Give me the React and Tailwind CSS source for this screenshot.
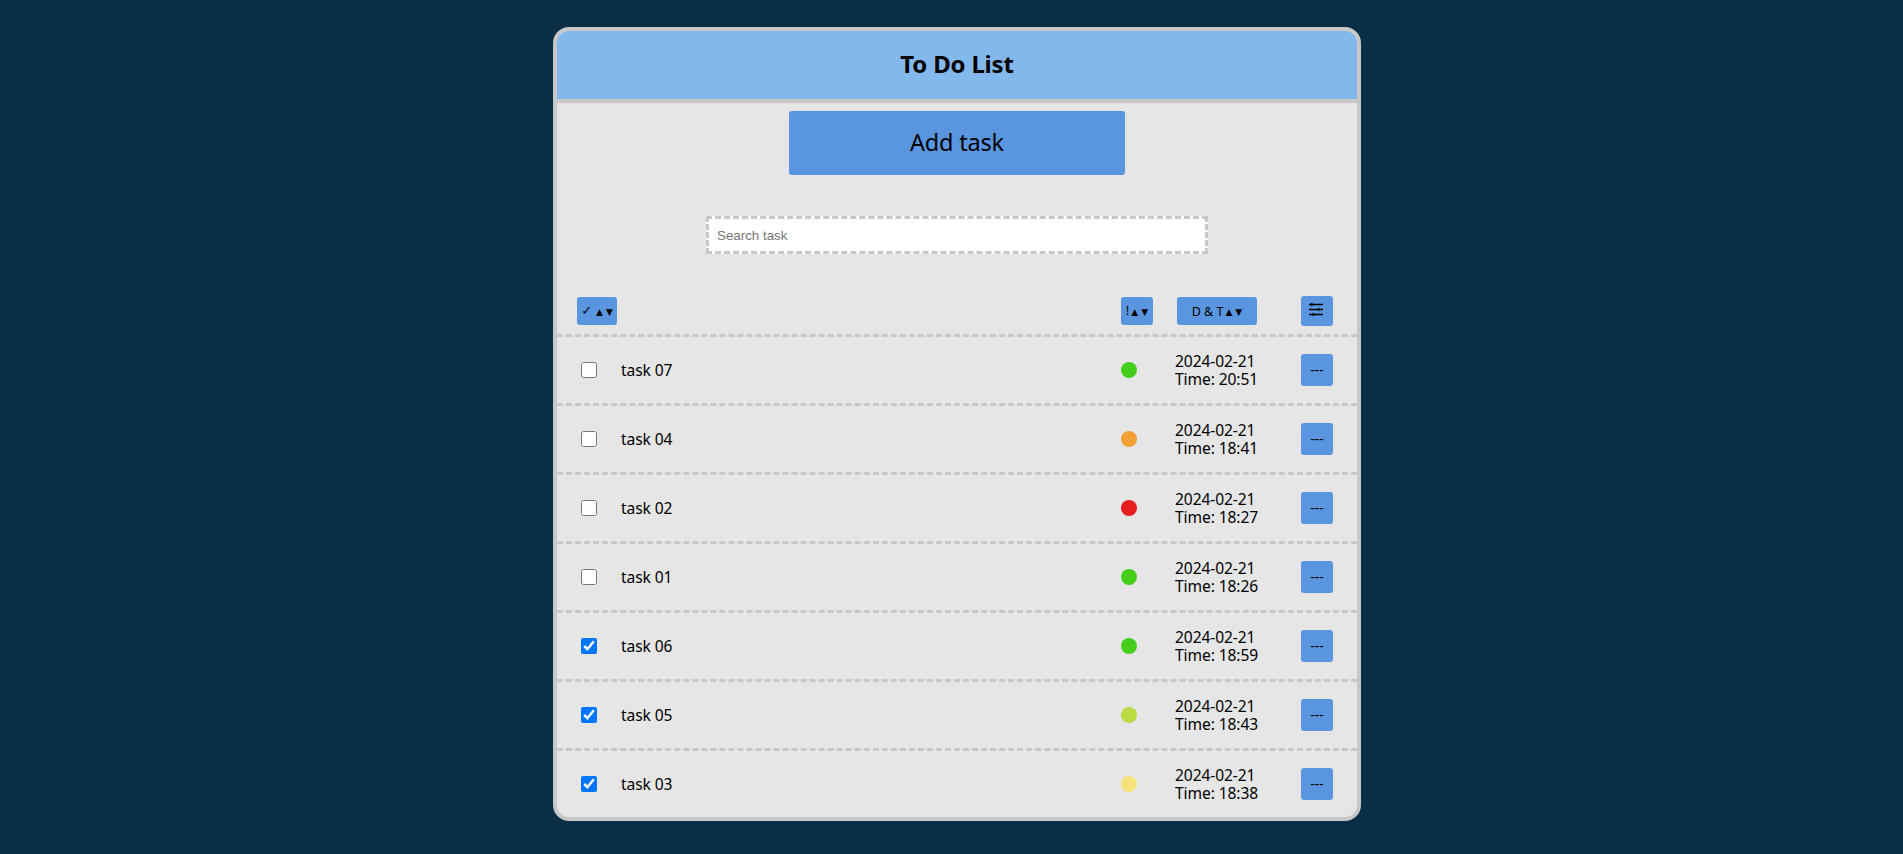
import React from 'react';

const tasks = [
  { name: 'task 07', color: 'bg-[#44ce1b]', time: '20:51', done: false },
  { name: 'task 04', color: 'bg-[#f2a134]', time: '18:41', done: false },
  { name: 'task 02', color: 'bg-[#e51f1f]', time: '18:27', done: false },
  { name: 'task 01', color: 'bg-[#44ce1b]', time: '18:26', done: false },
  { name: 'task 06', color: 'bg-[#44ce1b]', time: '18:59', done: true },
  { name: 'task 05', color: 'bg-[#bbdb44]', time: '18:43', done: true },
  { name: 'task 03', color: 'bg-[#f7e379]', time: '18:38', done: true },
];

function Button({ className, children }) {
  return (
    <button className={`flex shrink-0 items-center justify-center whitespace-nowrap rounded-[3px] bg-[#5a96e0] text-black ${className}`}>
      {children}
    </button>
  );
}

function Arrows() {
  return (
    <span className="ml-0.5 flex gap-[3px] pt-px font-['DejaVu_Sans',sans-serif] text-[9px] leading-3">
      <span>▲</span>
      <span>▼</span>
    </span>
  );
}

function FilterIcon() {
  return (
    <svg width="16" height="14" viewBox="0 0 16 14" className="-translate-x-px -translate-y-[2px]" stroke="#000" fill="#000">
      <path d="M1 2.5h14M1 7.5h14M1 12.5h14" strokeWidth="1.3" />
      <circle cx="3.7" cy="2.5" r="1" />
      <circle cx="10.7" cy="7.5" r="1" />
      <circle cx="5.3" cy="12.5" r="1" />
    </svg>
  );
}

function Task({ task }) {
  return (
    <li className="flex h-[69px] items-center border-t-[3px] border-dashed border-[#c8c8c8] pl-5 pr-6">
      <input type="checkbox" defaultChecked={task.done} className="mx-1 size-4 shrink-0" />
      <span className="ml-5 flex-1 text-[15.6px] leading-6 tracking-[-0.1px]">{task.name}</span>
      <span className={`size-4 rounded-full ${task.color}`} />
      <div className="ml-[38px] w-[126px] text-[15.6px] leading-[18px] tracking-[-0.1px]">
        <p>2024-02-21</p>
        <p>Time: {task.time}</p>
      </div>
      <Button className="size-8 text-[13.333px] font-medium">---</Button>
    </li>
  );
}

export default function App() {
  return (
    <div className="min-h-screen bg-[#0a2e46] pl-[11px] pt-[27px] font-['Noto_Sans',sans-serif] text-black">
      <main className="mx-auto h-[794px] w-[808px] overflow-hidden rounded-[16px] border-4 border-[#c8c8c8] bg-[#e6e6e6]">
        <header className="flex h-[72px] items-center justify-center border-b-4 border-[#c8c8c8] bg-[#83b8ec] pb-0.5">
          <h1 className="text-[24px] font-bold leading-7 tracking-[-0.2px]">To Do List</h1>
        </header>
        <section className="flex flex-col items-center pt-2">
          <Button className="h-16 w-[336px] text-[23.5px] tracking-[-0.2px]">Add task</Button>
          <input
            type="text"
            placeholder="Search task"
            className="mt-[41px] h-[38px] w-[502px] border-[3px] border-dashed border-[#c8c8c8] bg-white px-2 font-['Liberation_Sans',Arial,sans-serif] text-[13.333px] placeholder:text-[#757575]"
          />
        </section>
        <div className="mt-[42px] flex h-[30px] items-center pl-5 pr-6">
          <Button className="h-7 w-10 text-[13px]">
            <span className="mr-0.5 font-['DejaVu_Sans',sans-serif] text-[13px]">✓</span>
            <Arrows />
          </Button>
          <div className="flex-1" />
          <Button className="h-7 w-8 text-[13px]">!<Arrows /></Button>
          <Button className="ml-6 mr-11 h-7 w-20 text-[12.5px]"><span className="pt-0.5">D &amp; T</span><Arrows /></Button>
          <Button className="h-[30px] w-8"><FilterIcon /></Button>
        </div>
        <ul className="mt-2">
          {tasks.map((task) => (
            <Task key={task.name} task={task} />
          ))}
        </ul>
      </main>
    </div>
  );
}
